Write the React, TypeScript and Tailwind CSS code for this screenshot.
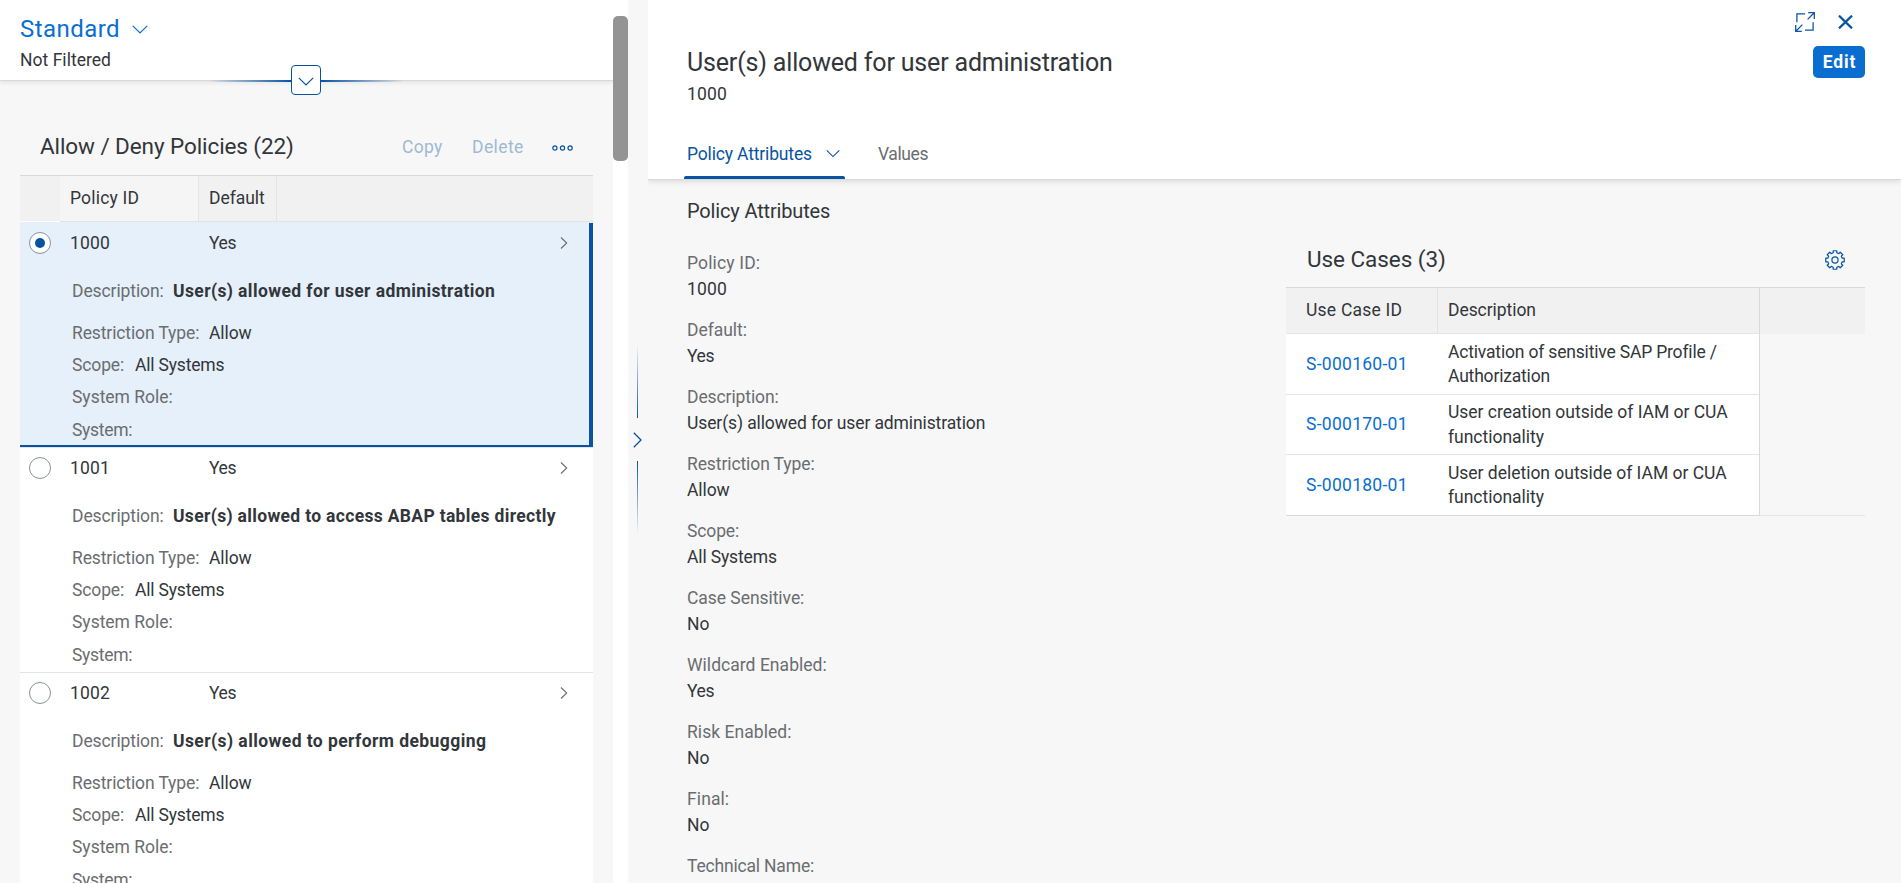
import type { ReactNode } from "react";

type Policy = { id: string; text: string; textClass: string; selected?: boolean };

const policies: Policy[] = [
  { id: "1000", text: "User(s) allowed for user administration", textClass: "tracking-[0.39px]", selected: true },
  { id: "1001", text: "User(s) allowed to access ABAP tables directly", textClass: "tracking-[0.325px]" },
  { id: "1002", text: "User(s) allowed to perform debugging", textClass: "tracking-[0.42px]" },
];

const attributes: { label: string; labelClass: string; value: string; valueClass: string }[] = [
  { label: "Policy ID:", labelClass: "tracking-[0.15px]", value: "1000", valueClass: "tracking-[0.16px]" },
  { label: "Default:", labelClass: "tracking-[-0.05px]", value: "Yes", valueClass: "tracking-[-0.4px]" },
  { label: "Description:", labelClass: "tracking-[-0.1px]", value: "User(s) allowed for user administration", valueClass: "tracking-[-0.113px]" },
  { label: "Restriction Type:", labelClass: "tracking-[-0.1px]", value: "Allow", valueClass: "tracking-[-0.1px]" },
  { label: "Scope:", labelClass: "tracking-[-0.13px]", value: "All Systems", valueClass: "tracking-[-0.14px]" },
  { label: "Case Sensitive:", labelClass: "tracking-[-0.05px]", value: "No", valueClass: "tracking-normal" },
  { label: "Wildcard Enabled:", labelClass: "tracking-[0.036px]", value: "Yes", valueClass: "tracking-[-0.4px]" },
  { label: "Risk Enabled:", labelClass: "tracking-[0.05px]", value: "No", valueClass: "tracking-normal" },
  { label: "Final:", labelClass: "tracking-[0.1px]", value: "No", valueClass: "tracking-normal" },
  { label: "Technical Name:", labelClass: "tracking-[-0.18px]", value: "", valueClass: "" },
];

const useCases = [
  { id: "S-000160-01", text: "Activation of sensitive SAP Profile / Authorization", textClass: "tracking-[-0.18px]", rowClass: "h-[61px]" },
  { id: "S-000170-01", text: "User creation outside of IAM or CUA functionality", textClass: "tracking-[-0.02px]", rowClass: "h-[60px]" },
  { id: "S-000180-01", text: "User deletion outside of IAM or CUA functionality", textClass: "tracking-[-0.02px]", rowClass: "h-[60px]" },
];

function ChevronDown({ className = "" }: { className?: string }) {
  return (
    <svg className={`h-[9px] w-[16px] ${className}`} viewBox="0 0 16 9" fill="none" stroke="currentColor" strokeWidth="1.2">
      <path d="M.8.8 8 8 15.2.8" />
    </svg>
  );
}

function ChevronRight() {
  return (
    <svg className="h-[12px] w-[8px]" viewBox="0 0 8 12" fill="none" stroke="currentColor" strokeWidth="1.1">
      <path d="M1 .5 6.7 6 1 11.5" />
    </svg>
  );
}

function Gear() {
  const d =
    Array.from({ length: 8 }, (_, i) => {
      const point = (radius: number, degrees: number) => {
        const a = ((i * 45 + degrees - 90) * Math.PI) / 180;
        return `${(10 + radius * Math.cos(a)).toFixed(2)} ${(10 + radius * Math.sin(a)).toFixed(2)}`;
      };
      return `${i === 0 ? "M" : "L"}${point(7.4, -14)} L${point(9.4, -11)} L${point(9.4, 11)} L${point(7.4, 14)}`;
    }).join(" ") + "Z";
  return (
    <svg className="h-[20px] w-[20px]" viewBox="0 0 20 20" fill="none" stroke="currentColor" strokeWidth="1.2" strokeLinejoin="round">
      <path d={d} />
      <circle cx="10" cy="10" r="3.1" />
    </svg>
  );
}

function ExpandIcon() {
  return (
    <svg className="h-[20px] w-[20px]" viewBox="0 0 20 20" fill="none" stroke="currentColor" strokeWidth="1.25">
      <path d="M1.9 10.2V1.9h8.2M18.1 10.2v7.9H10M13.2.7h6.1v6.2M19.2.8l-6.6 6.6M.7 13.1v6.2h6.1M.8 19.2l6.6-6.6" />
    </svg>
  );
}

function Radio({ selected }: { selected?: boolean }) {
  return (
    <span className="flex size-[22px] items-center justify-center rounded-full border-[1.25px] border-[#89919a] bg-white">
      {selected && <span className="size-[10px] rounded-full bg-[#0854a0]" />}
    </span>
  );
}

function Detail({ label, labelClass, children }: { label: string; labelClass: string; children?: ReactNode }) {
  return (
    <div className="flex">
      <span className={`text-[#6a6d70] ${labelClass}`}>{label}</span>
      {children}
    </div>
  );
}

function PolicyRow({ policy }: { policy: Policy }) {
  const { selected } = policy;
  return (
    <div className={`flex h-[225px] shrink-0 ${selected ? "border-b-2 border-[#0854a0] bg-[#e5f0fa]" : "border-t border-[#e4e4e4] bg-white"}`}>
      <div className={`flex w-[40px] justify-center ${selected ? "pt-[10px]" : "pt-[9px]"}`}>
        <Radio selected={selected} />
      </div>
      <div className="flex-1 pl-[10px]">
        <div className={`flex items-center ${selected ? "h-[42px]" : "h-[40px]"}`}>
          <span className="w-[139px] tracking-[0.16px]">{policy.id}</span>
          <span className="flex-1 tracking-[-0.4px]">Yes</span>
          <span className={`text-[#6a6d70] ${selected ? "mr-[21px]" : "mr-[25px]"}`}>
            <ChevronRight />
          </span>
        </div>
        <div className={`pl-[2px] leading-[32px] ${selected ? "pt-[11px]" : "pt-[12px]"}`}>
          <Detail label="Description:" labelClass="w-[101px] tracking-[-0.1px]">
            <span className={`font-bold whitespace-nowrap ${policy.textClass}`}>{policy.text}</span>
          </Detail>
          <div className="pt-[10px]">
            <Detail label="Restriction Type:" labelClass="w-[137px] tracking-[-0.115px]">
              <span className="tracking-[-0.1px]">Allow</span>
            </Detail>
            <Detail label="Scope:" labelClass="w-[63px] tracking-[-0.13px]">
              <span className="tracking-[-0.18px]">All Systems</span>
            </Detail>
            <Detail label="System Role:" labelClass="tracking-[-0.02px]" />
            <div className="pt-px">
              <Detail label="System:" labelClass="tracking-[-0.3px]" />
            </div>
          </div>
        </div>
      </div>
      {selected && <div className="-mb-[2px] mt-px w-[4px] bg-[#0854a0]" />}
    </div>
  );
}

function ListPanel() {
  return (
    <section className="flex w-[613px] shrink-0 flex-col overflow-hidden">
      <header className="relative h-[81px] shrink-0 border-b border-[#d9d9d9] bg-white pl-[20px] shadow-[0_2px_4px_rgba(0,0,0,0.08)]">
        <div className="flex items-center pt-[13px] text-[24px] leading-[33px] text-[#0a6ed1]">
          <span className="tracking-[0.45px]">Standard</span>
          <ChevronDown className="ml-[12px]" />
        </div>
        <div className="pt-[2px] leading-[24px] tracking-[0.03px]">Not Filtered</div>
        <div className="absolute left-[208px] top-[65px] flex items-center">
          <div className="mt-[2px] h-[2px] w-[83px] bg-gradient-to-r from-transparent to-[#0854a0]" />
          <button className="flex size-[30px] items-center justify-center rounded-[4px] border-[1.25px] border-[#0854a0] bg-white text-[#0854a0]">
            <ChevronDown className="mt-[3px]" />
          </button>
          <div className="mt-[2px] h-[2px] w-[83px] bg-gradient-to-r from-[#0854a0] to-transparent" />
        </div>
      </header>
      <div className="flex min-h-0 flex-1 flex-col px-[20px] pt-[39px]">
        <div className="flex h-[55px] shrink-0 items-center pl-[20px]">
          <h2 className="-mt-[2px] flex-1 text-[22.5px] tracking-[-0.09px]">Allow / Deny Policies (22)</h2>
          <span className="w-[70px] tracking-[0.3px] text-[#9fb9d3]">Copy</span>
          <span className="w-[80px] tracking-[0.395px] text-[#9fb9d3]">Delete</span>
          <svg className="mr-[20px] h-[6px] w-[21px] text-[#0854a0]" viewBox="0 0 21 6" fill="none" stroke="currentColor" strokeWidth="1.2">
            <circle cx="2.9" cy="3" r="2.1" />
            <circle cx="10.5" cy="3" r="2.1" />
            <circle cx="18.1" cy="3" r="2.1" />
          </svg>
        </div>
        <div className="flex h-[47px] shrink-0 border-y border-t-[#d9d9d9] border-b-[#e4e4e4] bg-[#f1f1f1] leading-[44px]">
          <div className="-mb-px w-[40px] border-b border-white" />
          <div className="w-[139px] border-r border-[#e4e4e4] bg-[#f5f5f5] pl-[10px] tracking-[0.19px]">Policy ID</div>
          <div className="w-[78px] border-r border-[#e4e4e4] pl-[10px] tracking-[-0.045px]">Default</div>
        </div>
        {policies.map((policy) => (
          <PolicyRow key={policy.id} policy={policy} />
        ))}
      </div>
    </section>
  );
}

function Splitter() {
  return (
    <div className="flex w-[20px] shrink-0 flex-col items-center pr-px pt-[344px] text-[#0854a0]">
      <div className="h-[74px] w-px bg-gradient-to-b from-transparent to-[#0854a0]" />
      <div className="flex h-[43px] items-center">
        <svg className="h-[16px] w-[9px]" viewBox="0 0 9 16" fill="none" stroke="currentColor" strokeWidth="1.3">
          <path d="M.8.8 8 8 .8 15.2" />
        </svg>
      </div>
      <div className="h-[74px] w-px bg-gradient-to-b from-[#0854a0] to-transparent" />
    </div>
  );
}

function UseCaseTable() {
  return (
    <div className="w-[579px] pt-[18px]">
      <div className="flex h-[58px] items-center justify-between pl-[21px] pr-[20px]">
        <h3 className="mt-[3px] text-[22.5px] tracking-[-0.05px]">Use Cases (3)</h3>
        <span className="mt-[4px] text-[#0854a0]">
          <Gear />
        </span>
      </div>
      <div className="flex border-y border-t-[#d9d9d9] border-b-[#e4e4e4]">
        <div className="-mb-px w-[474px] border-r border-b border-[#d9d9d9]">
          <div className="flex h-[46px] border-b border-[#e4e4e4] bg-[#f1f1f1] leading-[44px]">
            <div className="w-[152px] border-r border-[#e4e4e4] pl-[20px] tracking-[0.22px]">Use Case ID</div>
            <div className="pl-[10px] tracking-[-0.06px]">Description</div>
          </div>
          {useCases.map((item) => (
            <div key={item.id} className={`flex items-center border-b border-[#e4e4e4] bg-white last:border-b-0 ${item.rowClass}`}>
              <div className="w-[152px] pl-[20px] tracking-[0.28px] text-[#0a6ed1]">{item.id}</div>
              <div className={`flex-1 pl-[10px] pr-[20px] leading-[24.5px] ${item.textClass}`}>{item.text}</div>
            </div>
          ))}
        </div>
        <div className="h-[46px] flex-1 bg-[#f1f1f1]" />
      </div>
    </div>
  );
}

function DetailPanel() {
  return (
    <section className="flex min-w-0 flex-1 flex-col overflow-hidden">
      <header className="z-10 flex h-[180px] shrink-0 justify-between border-b border-[#d9d9d9] bg-white pl-[36px] pr-[36px] shadow-[0_2px_5px_rgba(0,0,0,0.1)]">
        <div className="flex flex-col pl-[3px] pt-[46px]">
          <h1 className="text-[25px] leading-[33px] tracking-[-0.173px]">User(s) allowed for user administration</h1>
          <div className="pt-[3px] leading-[24px] tracking-[0.16px]">1000</div>
          <nav className="mt-auto -ml-[3px] flex">
            <div className="text-[#0854a0]">
              <div className="flex h-[44px] items-center px-[3px]">
                <span className="w-[139px] tracking-[-0.162px]">Policy Attributes</span>
                <ChevronDown className="-mt-[2px] !w-[14px]" />
              </div>
              <div className="h-[3px] w-[161px] rounded-t-[2px] bg-[#0854a0]" />
            </div>
            <div className="ml-[33px] flex h-[44px] items-center tracking-[-0.39px] text-[#6a6d70]">Values</div>
          </nav>
        </div>
        <div className="flex flex-col items-end pt-[12px]">
          <div className="mr-[12px] flex h-[20px] items-center gap-[23px] text-[#0854a0]">
            <ExpandIcon />
            <svg className="h-[14px] w-[15px]" viewBox="0 0 15 14" fill="none" stroke="currentColor" strokeWidth="2.2">
              <path d="M1 .6 14 13.4M14 .6 1 13.4" />
            </svg>
          </div>
          <button className="mt-[14px] h-[32px] w-[52px] rounded-[5px] bg-[#0a6ed1] pl-px font-bold tracking-[0.8px] text-white">Edit</button>
        </div>
      </header>
      <div className="flex min-h-0 flex-1 justify-between pl-[39px] pr-[36px] pt-[16px]">
        <div>
          <h2 className="text-[20px] leading-[30px] tracking-[-0.158px]">Policy Attributes</h2>
          <dl className="pt-[24px] leading-[26px]">
            {attributes.map((item) => (
              <div key={item.label} className="h-[67px]">
                <dt className={`text-[#6a6d70] ${item.labelClass}`}>{item.label}</dt>
                <dd className={item.valueClass}>{item.value}</dd>
              </div>
            ))}
          </dl>
        </div>
        <div className="pt-[15px]">
          <UseCaseTable />
        </div>
      </div>
    </section>
  );
}

export default function App() {
  return (
    <main className="flex h-[883px] w-[1901px] overflow-hidden bg-[#f7f7f7] font-['Roboto',sans-serif] text-[17.5px] text-[#32363a]">
      <ListPanel />
      <div className="w-[15px] shrink-0 bg-white pt-[16px]">
        <div className="h-[145px] rounded-[5px] bg-[#949494]" />
      </div>
      <Splitter />
      <DetailPanel />
    </main>
  );
}
